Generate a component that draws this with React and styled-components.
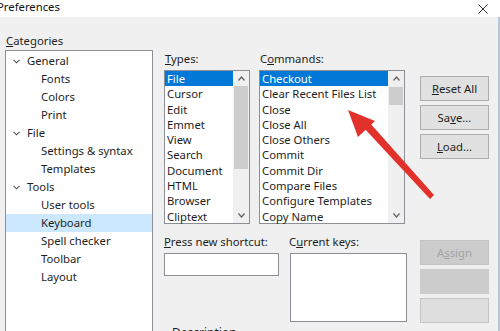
import React from "react";
import styled, { createGlobalStyle } from "styled-components";

const GlobalStyle = createGlobalStyle`
  html, body {
    margin: 0;
    padding: 0;
    background: #f0f0f0;
  }
  body {
    font-family: "Noto Sans", "Open Sans", sans-serif;
    font-size: 11.3px;
    color: #1e1e1e;
  }
  u {
    text-decoration: underline;
    text-underline-offset: 1px;
  }
`;

const Window = styled.div`
  position: relative;
  width: 500px;
  height: 331px;
  overflow: hidden;
  display: flex;
  flex-direction: column;
  background: #f0f0f0;
`;

const TitleBar = styled.div`
  height: 17px;
  flex: none;
  background: #fff;
  display: flex;
  align-items: center;
  justify-content: space-between;
  padding-right: 12px;
`;

const Title = styled.div`
  margin-left: -3px;
  line-height: 17px;
  margin-top: -4px;
  color: #111;
`;

const Body = styled.div`
  flex: 1;
  display: flex;
  padding-left: 5px;
  border-right: 2px solid #b7c5d3;
  min-height: 0;
`;

const LeftCol = styled.div`
  width: 148px;
  display: flex;
  flex-direction: column;
`;

const Label = styled.div`
  height: 18px;
  line-height: 18px;
  padding-left: ${(p) => p.$indent || 0}px;
  margin-top: ${(p) => p.$top || 0}px;
  margin-bottom: 2px;
  white-space: nowrap;
`;

const TreeBox = styled.div`
  flex: 1;
  background: #fff;
  border: 1px solid #8c9096;
  border-bottom: none;
  padding-top: 1px;
  margin-top: -2px;
`;

const TreeRow = styled.div`
  height: 18px;
  line-height: 18px;
  display: flex;
  align-items: center;
  padding-left: ${(p) => (p.$level ? 35 : 7)}px;
  background: ${(p) => (p.$selected ? "#cce8ff" : "transparent")};
  white-space: nowrap;
`;

const Chevron = styled.svg`
  width: 7px;
  height: 5px;
  margin-right: 7px;
  flex: none;
`;

const Middle = styled.div`
  margin-left: 11px;
  width: 243px;
  display: flex;
  flex-direction: column;
`;

const ListsRow = styled.div`
  display: flex;
  gap: 9px;
`;

const Column = styled.div`
  width: ${(p) => p.$w}px;
  display: flex;
  flex-direction: column;
`;

const ListBox = styled.div`
  height: 154px;
  box-sizing: border-box;
  background: #fff;
  border: 1px solid #8c9096;
  display: flex;
`;

const Items = styled.div`
  flex: 1;
  min-width: 0;
`;

const Item = styled.div`
  height: 15.3px;
  line-height: 15.3px;
  padding-left: 2px;
  white-space: nowrap;
  overflow: hidden;
  background: ${(p) => (p.$selected ? "#0078d7" : "transparent")};
  color: ${(p) => (p.$selected ? "#fff" : "inherit")};
`;

const Scrollbar = styled.div`
  width: 16px;
  background: #f0f0f0;
  display: flex;
  flex-direction: column;
`;

const ScrollArrow = styled.div`
  height: 15px;
  display: flex;
  align-items: center;
  justify-content: center;
  flex: none;
`;

const Track = styled.div`
  flex: 1;
  padding: 0 1px;
`;

const Thumb = styled.div`
  margin-top: ${(p) => p.$top}px;
  height: ${(p) => p.$h}px;
  background: #cdcdcd;
`;

const BottomRow = styled.div`
  display: flex;
  gap: 10px;
  margin-top: 9px;
`;

const Input = styled.div`
  height: 23px;
  box-sizing: border-box;
  background: #fff;
  border: 1px solid #8c9096;
`;

const KeysBox = styled.div`
  height: 69px;
  margin-left: 1px;
  box-sizing: border-box;
  background: #fff;
  border: 1px solid #8c9096;
`;

const Description = styled.div`
  margin-top: 3px;
  padding-left: 8px;
  font-size: 12px;
  line-height: 16px;
`;

const RightCol = styled.div`
  margin-left: 13px;
  width: 69px;
  display: flex;
  flex-direction: column;
  gap: 4px;
  padding-top: 59px;
`;

const Button = styled.div`
  height: 25px;
  box-sizing: border-box;
  margin-top: ${(p) => p.$gap || 0}px;
  line-height: 23px;
  text-align: center;
  background: ${(p) => p.$bg || "#e1e1e1"};
  border: 1px solid ${(p) => p.$border || "#adadad"};
  color: ${(p) => (p.$disabled ? "#a3a3a3" : "#1e1e1e")};
`;

const Arrow = styled.svg`
  position: absolute;
  left: 0;
  top: 0;
  pointer-events: none;
`;

const Caret = ({ up }) => (
  <svg width="7" height="5" viewBox="0 0 7 5">
    <polyline
      points={up ? "0.5,4.5 3.5,1 6.5,4.5" : "0.5,0.5 3.5,4 6.5,0.5"}
      fill="none"
      stroke="#606060"
      strokeWidth="1.2"
    />
  </svg>
);

const List = ({ items, thumbTop, thumbH }) => (
  <ListBox>
    <Items>
      {items.map((t, i) => (
        <Item key={t} $selected={i === 0}>
          {t}
        </Item>
      ))}
    </Items>
    <Scrollbar>
      <ScrollArrow>
        <Caret up />
      </ScrollArrow>
      <Track>
        <Thumb $top={thumbTop} $h={thumbH} />
      </Track>
      <ScrollArrow>
        <Caret />
      </ScrollArrow>
    </Scrollbar>
  </ListBox>
);

const tree = [
  { t: "General", group: true },
  { t: "Fonts" },
  { t: "Colors" },
  { t: "Print" },
  { t: "File", group: true },
  { t: "Settings & syntax" },
  { t: "Templates" },
  { t: "Tools", group: true },
  { t: "User tools" },
  { t: "Keyboard", selected: true },
  { t: "Spell checker" },
  { t: "Toolbar" },
  { t: "Layout" },
];

const types = [
  "File",
  "Cursor",
  "Edit",
  "Emmet",
  "View",
  "Search",
  "Document",
  "HTML",
  "Browser",
  "Cliptext",
];

const commands = [
  "Checkout",
  "Clear Recent Files List",
  "Close",
  "Close All",
  "Close Others",
  "Commit",
  "Commit Dir",
  "Compare Files",
  "Configure Templates",
  "Copy Name",
];

export default function App() {
  return (
    <>
      <GlobalStyle />
      <Window>
        <TitleBar>
          <Title>Preferences</Title>
          <svg width="10" height="10" viewBox="0 0 10 10">
            <path d="M0.5 0.5 L9.5 9.5 M9.5 0.5 L0.5 9.5" stroke="#333" strokeWidth="1" />
          </svg>
        </TitleBar>
        <Body>
          <LeftCol>
            <Label $top={15} $indent={1}>
              <u>C</u>ategories
            </Label>
            <TreeBox>
              {tree.map((n) => (
                <TreeRow key={n.t} $level={n.group ? 0 : 1} $selected={n.selected}>
                  {n.group && (
                    <Chevron viewBox="0 0 7 5">
                      <polyline
                        points="0.5,0.8 3.5,3.8 6.5,0.8"
                        fill="none"
                        stroke="#555"
                        strokeWidth="1.1"
                      />
                    </Chevron>
                  )}
                  {n.t}
                </TreeRow>
              ))}
            </TreeBox>
          </LeftCol>

          <Middle>
            <ListsRow>
              <Column $w={86}>
                <Label $top={33} $indent={1}>
                  <u>T</u>ypes:
                </Label>
                <List items={types} thumbTop={0} thumbH={83} />
              </Column>
              <Column $w={146}>
                <Label $top={33} $indent={1}>
                  C<u>o</u>mmands:
                </Label>
                <List items={commands} thumbTop={1} thumbH={18} />
              </Column>
            </ListsRow>
            <BottomRow>
              <Column $w={116}>
                <Label>
                  <u>P</u>ress new shortcut:
                </Label>
                <Input />
              </Column>
              <Column $w={119}>
                <Label>
                  C<u>u</u>rrent keys:
                </Label>
                <KeysBox />
              </Column>
            </BottomRow>
            <Description>Description</Description>
          </Middle>

          <RightCol>
            <Button>
              <u>R</u>eset All
            </Button>
            <Button>
              Sa<u>v</u>e...
            </Button>
            <Button>
              <u>L</u>oad...
            </Button>
            <Button $gap={77} $disabled $bg="#cccccc" $border="#c4c4c4">
              A<u>s</u>sign
            </Button>
            <Button $disabled $bg="#cccccc" $border="#cccccc" />
            <Button $disabled $bg="#dedede" $border="#c6c6c6" />
          </RightCol>
        </Body>

        <Arrow width="500" height="331" viewBox="0 0 500 331">
          <polygon points="363,127 369,122 434,195 430,199" fill="#e2312b" />
          <polygon points="348,110 375,121 358,137" fill="#e2312b" />
        </Arrow>
      </Window>
    </>
  );
}
